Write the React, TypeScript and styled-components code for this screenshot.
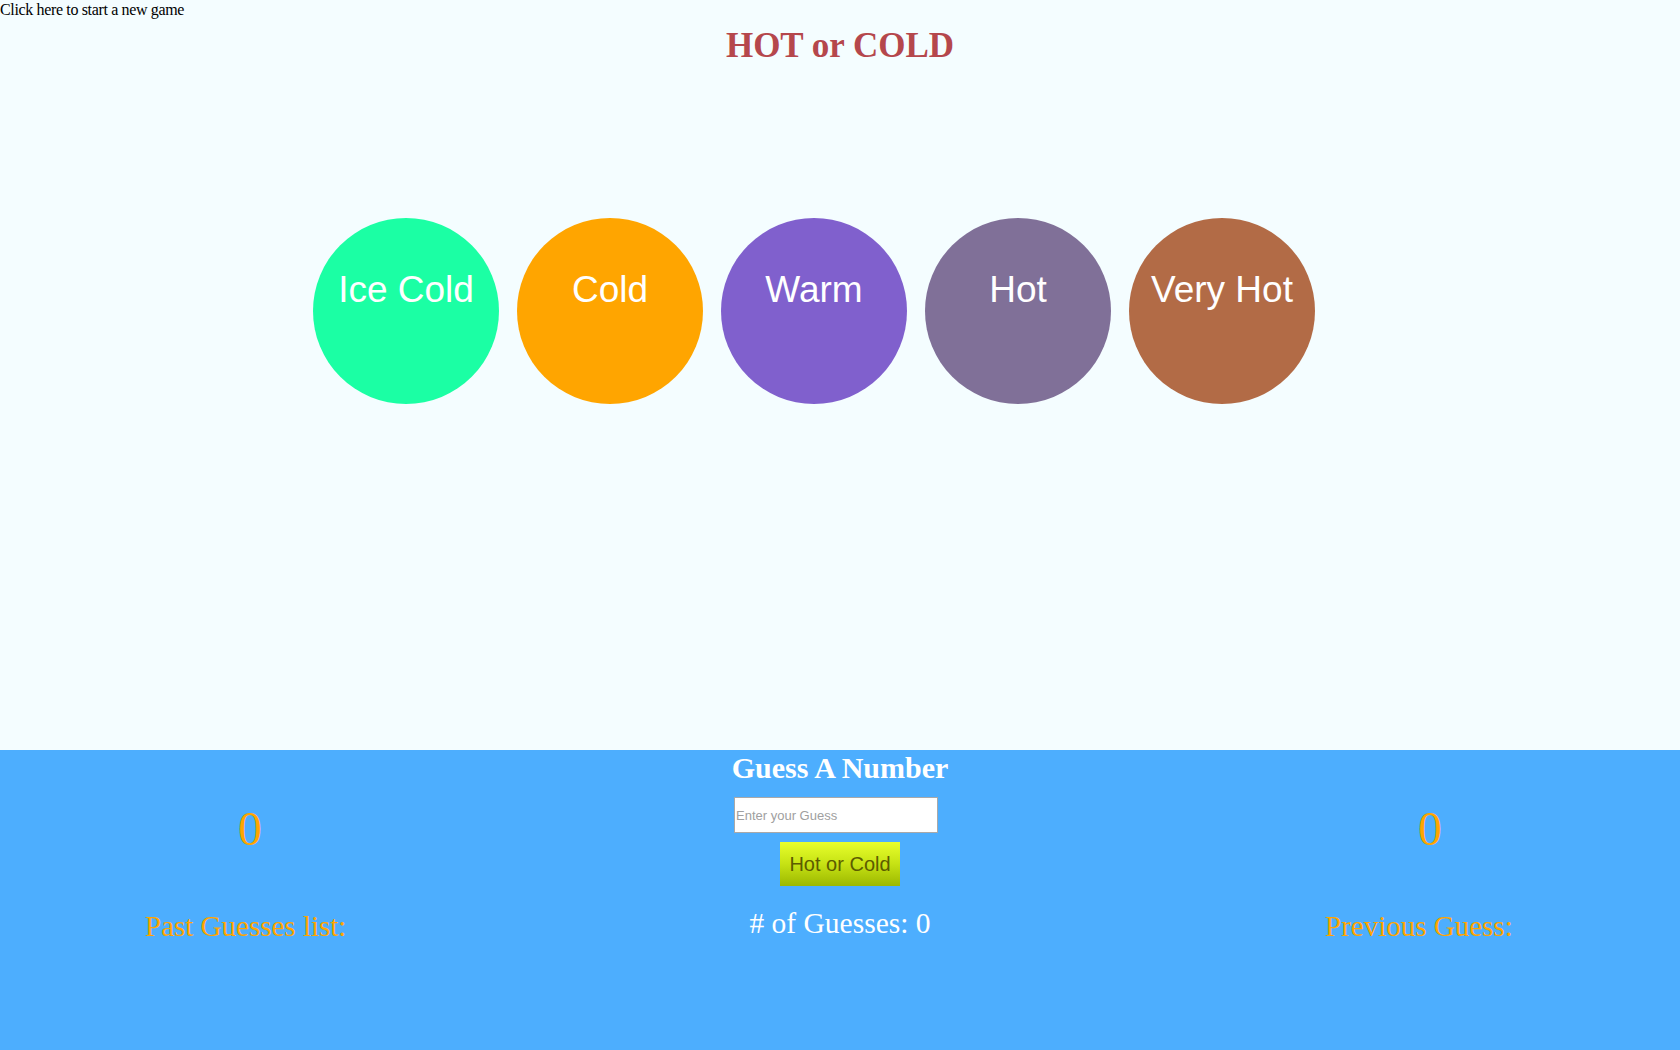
import React from "react";
import styled, { createGlobalStyle } from "styled-components";

const GlobalStyle = createGlobalStyle`
  html, body {
    margin: 0;
    padding: 0;
    background: #f4fdff;
    font-family: "Liberation Serif", "Times New Roman", serif;
  }
  * { box-sizing: border-box; }
`;

const Page = styled.div`
  width: 100%;
  min-height: 1050px;
  display: flex;
  flex-direction: column;
`;

const Top = styled.section`
  height: 750px;
  display: flex;
  flex-direction: column;
`;

const NewGameLink = styled.a`
  font-family: "Liberation Serif", "Times New Roman", serif;
  font-size: 16px;
  line-height: 18px;
  padding-top: 1px;
  letter-spacing: -0.35px;
  color: #000;
  text-decoration: none;
  cursor: pointer;
  align-self: flex-start;
`;

const Title = styled.h1`
  margin: 7px 0 0;
  font-family: "Liberation Serif", "Times New Roman", serif;
  font-size: 35px;
  font-weight: bold;
  color: #b5474c;
  text-align: center;
`;

const CircleRow = styled.div`
  margin-top: 152px;
  display: flex;
  justify-content: center;
  gap: 18px;
  padding-right: 52px;
`;

const Circle = styled.div<{ $bg: string }>`
  width: 186px;
  height: 186px;
  border-radius: 50%;
  background: ${(p) => p.$bg};
  color: #fff;
  font-family: "Liberation Sans", Arial, sans-serif;
  font-size: 37px;
  text-align: center;
  padding-top: 51px;
  white-space: nowrap;
`;

const Bottom = styled.section`
  flex: 1;
  height: 300px;
  background: #4daefe;
  display: grid;
  grid-template-columns: 500px 1fr 500px;
`;

const SideColumn = styled.div`
  display: flex;
  flex-direction: column;
`;

const BigNumber = styled.div`
  margin-top: 51px;
  font-family: "Liberation Serif", "Times New Roman", serif;
  font-size: 48px;
  color: #ffa500;
  text-align: center;
`;

const SideLabel = styled.div`
  margin-top: 54px;
  padding-left: 145px;
  font-family: "Liberation Serif", "Times New Roman", serif;
  font-size: 29px;
  color: #ffa500;
`;

const CenterColumn = styled.div`
  display: flex;
  flex-direction: column;
  align-items: center;
`;

const Heading = styled.h2`
  margin: 1px 0 0;
  font-family: "Liberation Serif", "Times New Roman", serif;
  font-size: 30px;
  font-weight: bold;
  color: #fff;
`;

const GuessInput = styled.input`
  margin-top: 12px;
  width: 204px;
  height: 36px;
  padding: 0 1px;
  border: 1px solid #a9a9a9;
  background: #fff;
  font-family: "Liberation Sans", Arial, sans-serif;
  font-size: 13px;
  outline: none;
  margin-left: -8px;
  &::placeholder {
    color: #a0a0a0;
  }
`;

const GuessButton = styled.button`
  margin-top: 9px;
  width: 120px;
  height: 44px;
  border: none;
  background: linear-gradient(to bottom, #e8ff2c 0%, #c6e214 50%, #9cb800 100%);
  color: #5c5c00;
  font-family: "Liberation Sans", Arial, sans-serif;
  font-size: 20px;
  cursor: pointer;
  padding: 0;
`;

const CountText = styled.div`
  margin-top: 21px;
  font-family: "Liberation Serif", "Times New Roman", serif;
  font-size: 29.5px;
  color: #fff;
`;

const circles = [
  { label: "Ice Cold", color: "#1bffa4" },
  { label: "Cold", color: "#ffa500" },
  { label: "Warm", color: "#8060cd" },
  { label: "Hot", color: "#807098" },
  { label: "Very Hot", color: "#b26b46" },
];

export default function App() {
  return (
    <Page>
      <GlobalStyle />
      <Top>
        <NewGameLink>Click here to start a new game</NewGameLink>
        <Title>HOT or COLD</Title>
        <CircleRow>
          {circles.map((c) => (
            <Circle key={c.label} $bg={c.color}>
              {c.label}
            </Circle>
          ))}
        </CircleRow>
      </Top>
      <Bottom>
        <SideColumn>
          <BigNumber>0</BigNumber>
          <SideLabel>Past Guesses list:</SideLabel>
        </SideColumn>
        <CenterColumn>
          <Heading>Guess A Number</Heading>
          <GuessInput placeholder="Enter your Guess" />
          <GuessButton>Hot or Cold</GuessButton>
          <CountText># of Guesses: 0</CountText>
        </CenterColumn>
        <SideColumn>
          <BigNumber>0</BigNumber>
          <SideLabel>Previous Guess:</SideLabel>
        </SideColumn>
      </Bottom>
    </Page>
  );
}
